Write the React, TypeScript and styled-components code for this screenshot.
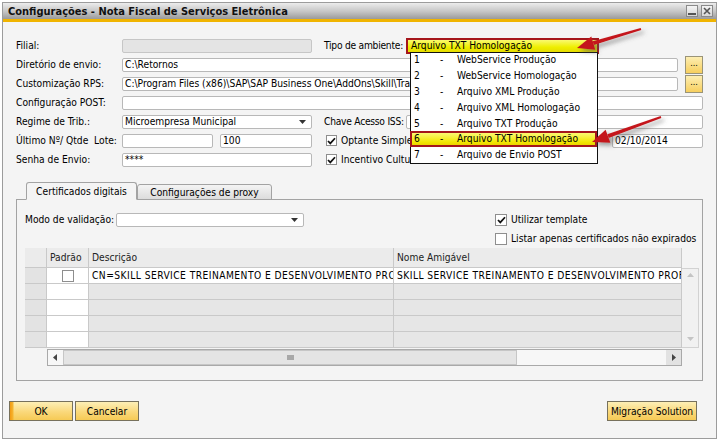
import styled, { createGlobalStyle } from "styled-components";

const FONT = `"DejaVu Sans Condensed", "DejaVu Sans", Tahoma, sans-serif`;

const GlobalStyle = createGlobalStyle`
  html, body { margin: 0; padding: 0; background: #ffffff; }
  body { font-family: ${FONT}; font-size: 10.2px; color: #000; }
  * { box-sizing: border-box; }
`;

const OPTIONS: ReadonlyArray<[string, string]> = [
  ["1", "WebService Produção"],
  ["2", "WebService Homologação"],
  ["3", "Arquivo XML Produção"],
  ["4", "Arquivo XML Homologação"],
  ["5", "Arquivo TXT Produção"],
  ["6", "Arquivo TXT Homologação"],
  ["7", "Arquivo de Envio POST"],
];

const EMPTY_ROWS = [1, 2, 3, 4];

// ---------- icons ----------

const CheckMark = () => (
  <svg width="9" height="8" viewBox="0 0 9 8">
    <path d="M1 4 L3.3 6.4 L8 1.2" fill="none" stroke="#111" strokeWidth="1.7" />
  </svg>
);

const Tri = ({ dir, color }: { dir: "up" | "down" | "left" | "right"; color: string }) => {
  const pts = {
    down: "0,0 7,0 3.5,4",
    up: "0,4 7,4 3.5,0",
    left: "4,0 4,7 0,3.5",
    right: "0,0 0,7 4,3.5",
  }[dir];
  const horiz = dir === "left" || dir === "right";
  return (
    <svg width={horiz ? 4 : 7} height={horiz ? 7 : 4} viewBox={horiz ? "0 0 4 7" : "0 0 7 4"}>
      <polygon points={pts} fill={color} />
    </svg>
  );
};

const Arrow = ({ x1, y1, x2, y2 }: { x1: number; y1: number; x2: number; y2: number }) => {
  const dx = x2 - x1;
  const dy = y2 - y1;
  const len = Math.hypot(dx, dy);
  const ux = dx / len;
  const uy = dy / len;
  const head = 17;
  const half = 7;
  const bx = x2 - ux * head;
  const by = y2 - uy * head;
  const px = -uy;
  const py = ux;
  const tail = 1;
  const neck = 2;
  const body = `${x1 + px * tail},${y1 + py * tail} ${bx + px * neck},${by + py * neck} ${bx - px * neck},${by - py * neck} ${x1 - px * tail},${y1 - py * tail}`;
  const tip = `${x2},${y2} ${bx + px * half},${by + py * half} ${bx - px * half},${by - py * half}`;
  return (
    <g filter="url(#arrowShadow)">
      <polygon points={body} fill="#c4161c" />
      <polygon points={tip} fill="#c4161c" />
    </g>
  );
};

// ---------- window chrome ----------

const Screen = styled.div`
  position: relative;
  width: 718px;
  height: 441px;
  padding: 2px 1px 2px 2px;
`;

const Window = styled.div`
  width: 715px;
  height: 437px;
  border: 1px solid #9c9c9c;
  background: #f4f4f4;
  display: flex;
  flex-direction: column;
`;

const TitleBar = styled.div`
  height: 19px;
  flex: none;
  display: flex;
  align-items: center;
  padding: 0 3px 0 5px;
  background: linear-gradient(to bottom, #ececec 0%, #c4c4c4 55%, #9a9a9a 100%);
  border-bottom: 3px solid #f0b400;
`;

const TitleText = styled.div`
  font-weight: bold;
  font-size: 11px;
  color: #111;
`;

const TitleButtons = styled.div`
  margin-left: auto;
  display: flex;
  gap: 3px;
`;

const WinButton = styled.div`
  width: 12px;
  height: 12px;
  border: 1px solid #8a8a8a;
  background: linear-gradient(#f4f4f4, #d6d6d6);
  display: flex;
  align-items: center;
  justify-content: center;
`;

// ---------- form ----------

const Body = styled.div`
  padding: 14px 13px 0 13px;
  display: flex;
  flex-direction: column;
`;

const Form = styled.div`
  display: flex;
  flex-direction: column;
`;

const Row = styled.div`
  height: 19px;
  display: flex;
  align-items: center;
`;

const Label = styled.div`
  width: 106px;
  flex: none;
  white-space: pre;
`;

const RightLabel = styled.div`
  width: 82px;
  flex: none;
  margin-left: 12px;
  white-space: nowrap;
  letter-spacing: -0.25px;
`;

const Mid = styled.div`
  width: 190px;
  flex: none;
  display: flex;
  gap: 7px;
`;

const Right = styled.div<{ $inset?: number }>`
  flex: 1;
  display: flex;
  align-items: center;
  position: relative;
  min-width: 0;
  margin-left: ${(p) => p.$inset ?? 0}px;
`;

const Field = styled.div<{ $disabled?: boolean; $width?: number }>`
  height: 14px;
  flex: ${(p) => (p.$width ? "none" : "1")};
  width: ${(p) => (p.$width ? `${p.$width}px` : "auto")};
  min-width: 0;
  border: 1px solid ${(p) => (p.$disabled ? "#c6c6c6" : "#b8b8b8")};
  border-radius: 2px;
  background: ${(p) => (p.$disabled ? "#e4e4e4" : "#ffffff")};
  padding: 0 2px;
  line-height: 12px;
  white-space: nowrap;
  overflow: hidden;
  position: relative;
`;

const SelectField = styled(Field)`
  padding-right: 14px;
`;

const SelectArrow = styled.span`
  position: absolute;
  right: 5px;
  top: 4px;
  display: flex;
`;

const BrowseButton = styled.div`
  width: 18px;
  height: 18px;
  flex: none;
  margin-left: 7px;
  border: 1px solid #9a9478;
  background: linear-gradient(#fdeeb2, #f7cf5e);
  font-size: 9px;
  text-align: center;
  line-height: 12px;
`;

const CheckItem = styled.div`
  display: flex;
  align-items: center;
  gap: 4px;
  white-space: nowrap;
`;

const Checkbox = styled.div<{ $size: number }>`
  width: ${(p) => p.$size}px;
  height: ${(p) => p.$size}px;
  flex: none;
  border: 1px solid #8e8e8e;
  background: #fff;
  display: flex;
  align-items: center;
  justify-content: center;
`;

const TypeSelect = styled.div`
  position: relative;
  width: 193px;
  height: 16px;
  border: 2px solid #a5161b;
  background: linear-gradient(#fafa70, #eeee00 60%, #e6dc00);
  padding: 0 3px;
  line-height: 12px;
  white-space: nowrap;
`;

const OptionList = styled.div`
  position: absolute;
  top: 100%;
  left: 2px;
  right: -1px;
  z-index: 2;
  border: 1px solid #111;
  background: #fff;
`;

const OptionItem = styled.div<{ $active?: boolean }>`
  height: 15.8px;
  display: grid;
  grid-template-columns: 26px 17px 1fr;
  align-items: center;
  margin: ${(p) => (p.$active ? "0 0 0 -1px" : "0")};
  padding-left: ${(p) => (p.$active ? "4px" : "3px")};
  background: ${(p) => (p.$active ? "linear-gradient(#fdfd8c, #f2e600 70%, #e8c800)" : "#fff")};
  box-shadow: ${(p) => (p.$active ? "inset 0 0 0 2px #a5161b" : "none")};
`;

const DateField = styled(Field)`
  margin-left: auto;
`;

// ---------- tabs ----------

const TabStrip = styled.div`
  margin-top: 13px;
  height: 18px;
  padding-left: 10px;
  display: flex;
  align-items: flex-end;
  position: relative;
  z-index: 1;
`;

const Tab = styled.div<{ $active?: boolean }>`
  height: ${(p) => (p.$active ? "18px" : "16px")};
  width: ${(p) => (p.$active ? "111px" : "135px")};
  border: 1px solid #a3a3a3;
  border-bottom: ${(p) => (p.$active ? "1px solid #f4f4f4" : "1px solid #a3a3a3")};
  border-radius: 3px 3px 0 0;
  background: ${(p) => (p.$active ? "#f4f4f4" : "linear-gradient(#f4f4f4, #dcdcdc)")};
  display: flex;
  align-items: center;
  justify-content: center;
  white-space: nowrap;
`;

const Panel = styled.div`
  margin-top: -1px;
  height: 182px;
  border: 1px solid #a3a3a3;
  padding: 10px 4px 0 8px;
  display: flex;
  flex-direction: column;
`;

const PanelTop = styled.div`
  height: 38px;
  display: flex;
  align-items: flex-start;
`;

const ModoRow = styled.div`
  height: 19px;
  display: flex;
  align-items: center;
`;

const ModoLabel = styled.span`
  width: 91px;
  flex: none;
  white-space: nowrap;
`;

const CheckColumn = styled.div`
  margin-left: 191px;
  display: flex;
  flex-direction: column;
  ${CheckItem} {
    height: 19px;
  }
`;

// ---------- grid ----------

const Grid = styled.div`
  display: grid;
  grid-template-columns: 22px 42px 305px 288px 17px;
  grid-template-rows: 20px repeat(5, 16px) 18px;
`;

const Cell = styled.div<{ $tone: "head" | "rowhead" | "white" | "gray" }>`
  border-right: 1px solid #c9c9c9;
  border-bottom: 1px solid #c9c9c9;
  background: ${(p) =>
    ({ head: "#ebebeb", rowhead: "#e3e3e3", white: "#ffffff", gray: "#e6e6e6" })[p.$tone]};
  padding: 0 3px;
  white-space: nowrap;
  overflow: hidden;
  display: flex;
  align-items: center;
  color: ${(p) => (p.$tone === "head" ? "#222" : "#000")};
`;

const DataCell = styled(Cell)`
  letter-spacing: 0.45px;
`;

const CenterCell = styled(Cell)`
  justify-content: center;
`;

const VScroll = styled.div`
  grid-column: 5;
  grid-row: 2 / span 5;
  border: 1px solid #d2d2d2;
  border-left: none;
  background: #f1f1f1;
  display: flex;
  flex-direction: column;
  justify-content: space-between;
  align-items: center;
  padding: 4px 0 6px;
`;

const HScroll = styled.div`
  grid-column: 2 / span 3;
  grid-row: 7;
  margin-top: 1px;
  width: 635px;
  border: 1px solid #a9a9a9;
  background: #f7f7f7;
  display: flex;
  align-items: center;
  padding-left: 5px;
`;

const Thumb = styled.div`
  margin-left: 6px;
  width: 454px;
  height: 15px;
  border: 1px solid #c6c6c6;
  background: #e4e4e4;
  display: flex;
  align-items: center;
  justify-content: center;
`;

const ArrowButton = styled.div`
  margin-left: auto;
  width: 15px;
  height: 15px;
  background: #e2e2e2;
  display: flex;
  align-items: center;
  justify-content: center;
`;

const Grip = styled.div`
  width: 7px;
  height: 5px;
  background-image: radial-gradient(circle, #a8a8a8 0.8px, transparent 0.9px);
  background-size: 2px 2px;
`;

// ---------- footer ----------

const Footer = styled.div`
  margin-top: 20px;
  padding: 0 19px 0 6px;
  display: flex;
  gap: 2px;
`;

const ActionButton = styled.div<{ $width: number; $default?: boolean; $push?: boolean }>`
  width: ${(p) => p.$width}px;
  height: 20px;
  margin-left: ${(p) => (p.$push ? "auto" : "0")};
  border: 1px solid #77715c;
  background: ${(p) =>
    p.$default
      ? "linear-gradient(to right, #f29a12 0, #f6b530 3px, transparent 4px), linear-gradient(#fdefb6, #fad87a 55%, #f6ca55)"
      : "linear-gradient(#fdefb6, #fad87a 55%, #f6ca55)"};
  display: flex;
  align-items: center;
  justify-content: center;
  white-space: nowrap;
`;

const Overlay = styled.svg`
  position: absolute;
  left: 0;
  top: 0;
  pointer-events: none;
  z-index: 5;
`;

export default function App() {
  return (
    <Screen>
      <GlobalStyle />
      <Window>
        <TitleBar>
          <TitleText>Configurações - Nota Fiscal de Serviços Eletrônica</TitleText>
          <TitleButtons>
            <WinButton>
              <svg width="8" height="8" viewBox="0 0 8 8">
                <rect x="0" y="6" width="8" height="2" fill="#555" />
              </svg>
            </WinButton>
            <WinButton>
              <svg width="8" height="8" viewBox="0 0 8 8">
                <path d="M1 1 L7 7 M7 1 L1 7" stroke="#555" strokeWidth="1.6" />
              </svg>
            </WinButton>
          </TitleButtons>
        </TitleBar>

        <Body>
          <Form>
            <Row>
              <Label>Filial:</Label>
              <Mid>
                <Field $disabled />
              </Mid>
              <RightLabel>Tipo de ambiente:</RightLabel>
              <Right>
                <TypeSelect>
                  Arquivo TXT Homologação
                  <OptionList>
                    {OPTIONS.map(([n, text]) => (
                      <OptionItem key={n} $active={n === "6"}>
                        <span>{n}</span>
                        <span>-</span>
                        <span>{text}</span>
                      </OptionItem>
                    ))}
                  </OptionList>
                </TypeSelect>
              </Right>
            </Row>
            <Row>
              <Label>Diretório de envio:</Label>
              <Field>C:\Retornos</Field>
              <BrowseButton>...</BrowseButton>
            </Row>
            <Row>
              <Label>Customização RPS:</Label>
              <Field>C:\Program Files (x86)\SAP\SAP Business One\AddOns\Skill\TrataNFSe\Customizacao</Field>
              <BrowseButton>...</BrowseButton>
            </Row>
            <Row>
              <Label>Configuração POST:</Label>
              <Field />
            </Row>
            <Row>
              <Label>Regime de Trib.:</Label>
              <Mid>
                <SelectField>
                  Microempresa Municipal
                  <SelectArrow>
                    <Tri dir="down" color="#333" />
                  </SelectArrow>
                </SelectField>
              </Mid>
              <RightLabel>Chave Acesso ISS:</RightLabel>
              <Right>
                <Field />
              </Right>
            </Row>
            <Row>
              <Label>{"Último Nº/ Qtde  Lote:"}</Label>
              <Mid>
                <Field $width={91} />
                <Field $width={92}>100</Field>
              </Mid>
              <Right $inset={14}>
                <CheckItem>
                  <Checkbox $size={11}>
                    <CheckMark />
                  </Checkbox>
                  Optante Simples Nacional
                </CheckItem>
                <DateField $width={91}>02/10/2014</DateField>
              </Right>
            </Row>
            <Row>
              <Label>Senha de Envio:</Label>
              <Mid>
                <Field>****</Field>
              </Mid>
              <Right $inset={14}>
                <CheckItem>
                  <Checkbox $size={11}>
                    <CheckMark />
                  </Checkbox>
                  Incentivo Cultural
                </CheckItem>
              </Right>
            </Row>
          </Form>

          <TabStrip>
            <Tab $active>Certificados digitais</Tab>
            <Tab>Configurações de proxy</Tab>
          </TabStrip>
          <Panel>
            <PanelTop>
              <ModoRow>
                <ModoLabel>Modo de validação:</ModoLabel>
                <SelectField $width={188}>
                  <SelectArrow>
                    <Tri dir="down" color="#333" />
                  </SelectArrow>
                </SelectField>
              </ModoRow>
              <CheckColumn>
                <CheckItem>
                  <Checkbox $size={12}>
                    <CheckMark />
                  </Checkbox>
                  Utilizar template
                </CheckItem>
                <CheckItem>
                  <Checkbox $size={12} />
                  Listar apenas certificados não expirados
                </CheckItem>
              </CheckColumn>
            </PanelTop>

            <Grid>
              <Cell $tone="head" />
              <Cell $tone="head">Padrão</Cell>
              <Cell $tone="head">Descrição</Cell>
              <Cell $tone="head">Nome Amigável</Cell>
              <div />

              <Cell $tone="rowhead" />
              <CenterCell $tone="white">
                <Checkbox $size={12} />
              </CenterCell>
              <DataCell $tone="white">CN=SKILL SERVICE TREINAMENTO E DESENVOLVIMENTO PROFISSIONAL</DataCell>
              <DataCell $tone="white">SKILL SERVICE TREINAMENTO E DESENVOLVIMENTO PROFISSIONAL</DataCell>
              <VScroll>
                <Tri dir="up" color="#c4c4c4" />
                <Tri dir="down" color="#c4c4c4" />
              </VScroll>

              {EMPTY_ROWS.map((r) => [
                <Cell key={`h${r}`} $tone="rowhead" />,
                <Cell key={`p${r}`} $tone="white" />,
                <Cell key={`d${r}`} $tone="gray" />,
                <Cell key={`n${r}`} $tone="gray" />,
              ])}

              <HScroll>
                <Tri dir="left" color="#444" />
                <Thumb>
                  <Grip />
                </Thumb>
                <ArrowButton>
                  <Tri dir="right" color="#444" />
                </ArrowButton>
              </HScroll>
            </Grid>
          </Panel>
        </Body>

        <Footer>
          <ActionButton $width={64} $default>
            OK
          </ActionButton>
          <ActionButton $width={64}>Cancelar</ActionButton>
          <ActionButton $width={90} $push>
            Migração Solution
          </ActionButton>
        </Footer>
      </Window>

      <Overlay width="718" height="441" viewBox="0 0 718 441">
        <defs>
          <filter id="arrowShadow" x="-20%" y="-40%" width="150%" height="200%">
            <feDropShadow dx="3" dy="3" stdDeviation="2" floodColor="#555" floodOpacity="0.55" />
          </filter>
        </defs>
        <Arrow x1={641} y1={29} x2={577} y2={48} />
        <Arrow x1={661} y1={117} x2={592} y2={142} />
      </Overlay>
    </Screen>
  );
}
